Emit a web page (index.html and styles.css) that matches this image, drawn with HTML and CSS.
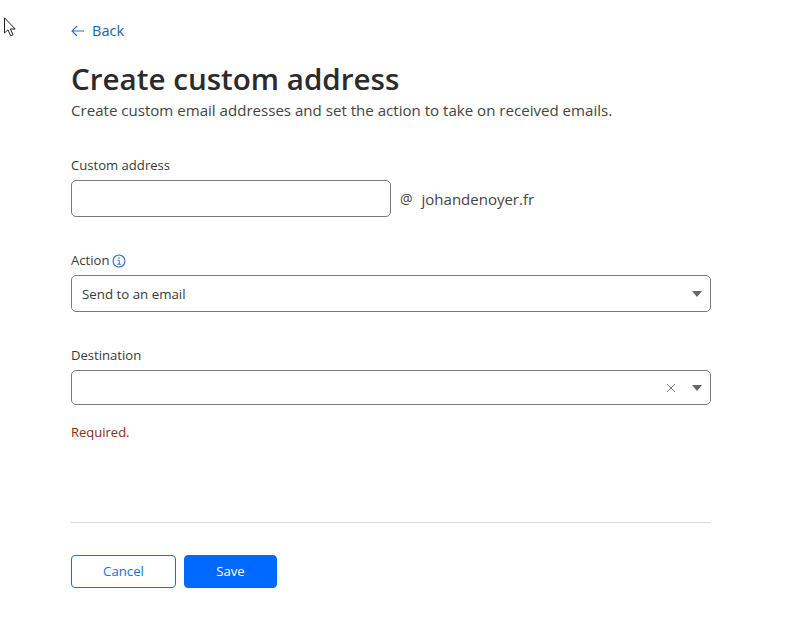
FILE: index.html
```
<!DOCTYPE html>
<html lang="en">
<head>
<meta charset="utf-8">
<title>Create custom address</title>
<link rel="stylesheet" href="styles.css">
</head>
<body>
<svg class="cursor" width="14" height="20" viewBox="0 0 14 20"><path d="M1.5.8V16l3.5-3.2 2.6 6 2.4-1-2.6-5.8h4.8z" fill="#fff" stroke="#222" stroke-width="1"/></svg>
<main class="page">
  <a class="back" href="#"><svg class="back-icon" width="14" height="12" viewBox="0 0 14 12"><path d="M6 1L1 6l5 5M1 6h12" fill="none" stroke="#2f6fc0" stroke-width="1.1"/></svg>Back</a>
  <h1 class="title">Create custom address</h1>
  <p class="subtitle">Create custom email addresses and set the action to take on received emails.</p>

  <div class="field field-address">
    <label class="label">Custom address</label>
    <div class="address-row">
      <div class="input input-short"></div>
      <span class="at">@</span>
      <span class="domain">johandenoyer.fr</span>
    </div>
  </div>

  <div class="field field-action">
    <label class="label label-info">Action<svg class="info" width="14" height="14" viewBox="0 0 14 14"><circle cx="7" cy="7" r="6" fill="none" stroke="#2f6fc0" stroke-width="1.1"/><path d="M5.6 6.1H7.2V10M5.4 10.2H8.8" fill="none" stroke="#2f6fc0" stroke-width="1"/><circle cx="7" cy="4" r=".8" fill="#2f6fc0"/></svg></label>
    <div class="input select select-action">
      <span class="select-value">Send to an email</span>
      <span class="caret"></span>
    </div>
  </div>

  <div class="field field-destination">
    <label class="label">Destination</label>
    <div class="input select select-destination">
      <svg class="clear" width="10" height="10" viewBox="0 0 10 10"><path d="M1 1l8 8M9 1l-8 8" stroke="#777" stroke-width="1" fill="none"/></svg>
      <span class="caret"></span>
    </div>
    <p class="error">Required.</p>
  </div>

  <hr class="divider">

  <div class="actions">
    <button class="btn btn-outline" type="button">Cancel</button>
    <button class="btn btn-primary" type="button">Save</button>
  </div>
</main>
</body>
</html>
```
FILE: styles.css
```
* { box-sizing: border-box; }
html, body { margin: 0; height: 100%; background: #fff; overflow: hidden; }
body { font-family: "Open Sans", "Noto Sans", sans-serif; color: #323130; }
.cursor { position: absolute; left: 3px; top: 17px; }
.page { width: 711px; padding: 20px 0 0 71px; }
.back { display: flex; align-items: center; gap: 7px; height: 20px; font-size: 14.6px; color: #1a5fb4; text-decoration: none; }
.back-icon { margin-top: 2px; }
.title { margin: 19px 0 0; font-size: 29.6px; line-height: 40px; font-weight: 600; color: #2b2b2b; }
.subtitle { margin: 1px 0 0; font-size: 15.08px; line-height: 20px; color: #444; }
.field { display: flex; flex-direction: column; }
.field-address { margin-top: 37px; }
.field-action { margin-top: 35px; }
.field-destination { margin-top: 35px; }
.label { font-size: 13.1px; line-height: 16px; height: 23px; color: #3a3a3a; }
.label-info { display: flex; align-items: flex-start; gap: 3px; }
.info { margin-top: 2px; }
.input { height: 37px; border: 1px solid #7a7a7a; border-radius: 5px; background: #fff; }
.address-row { display: flex; align-items: center; }
.input-short { width: 320px; }
.at { margin-left: 9px; font-size: 14px; color: #444; }
.domain { margin-left: 9px; font-size: 15px; color: #444; }
.select { display: flex; align-items: center; justify-content: space-between; padding: 0 10px; }
.select-value { font-size: 13.3px; color: #3a3a3a; }
.select-destination { height: 35px; justify-content: flex-end; }
.caret { width: 0; height: 0; border-left: 5px solid transparent; border-right: 5px solid transparent; border-top: 6px solid #666; margin-right: -2px; }
.clear { margin-right: 16px; }
.error { margin: 19px 0 0; height: 18px; font-size: 13px; line-height: 16px; color: #8c2a10; }
.divider { margin: 80px 0 0; border: 0; border-top: 1px solid #d9d9d9; }
.actions { display: flex; gap: 8px; margin-top: 32px; }
.btn { height: 33px; border-radius: 4px; font-family: inherit; font-size: 13.2px; padding: 0 0 2px; }
.btn-outline { width: 105px; background: #fff; border: 1px solid #0f78c8; color: #1a6fd8; }
.btn-primary { width: 93px; background: #0069ff; border: 1px solid #0069ff; color: #fff; }
```
